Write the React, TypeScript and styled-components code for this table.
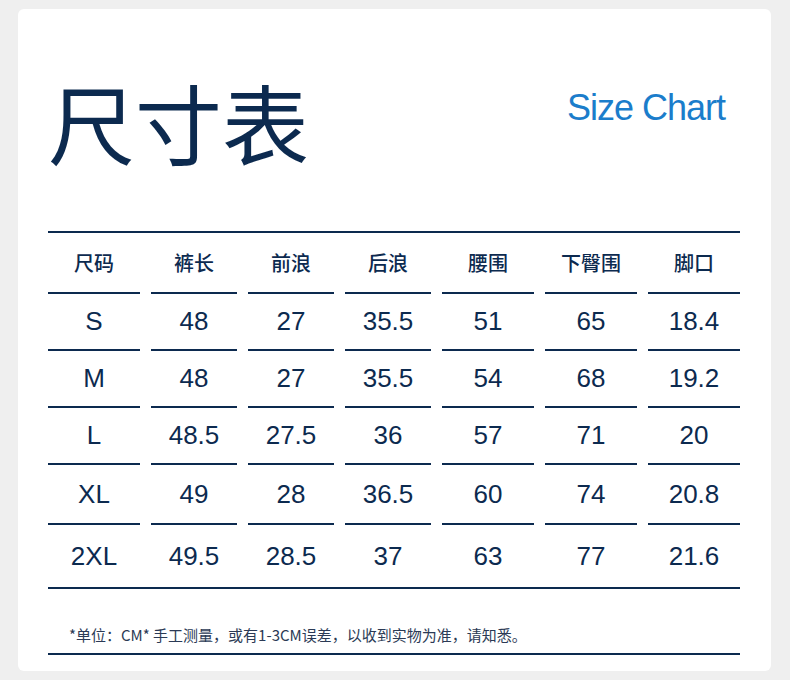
import React from 'react'
import styled, { createGlobalStyle } from 'styled-components'

const NAVY = '#0c2a4f'

const GlobalStyle = createGlobalStyle`
  html, body {
    margin: 0;
    padding: 0;
    background: #efefef;
  }
`

const headers = ['尺码', '裤长', '前浪', '后浪', '腰围', '下臀围', '脚口']

const rows: { cells: string[]; height: number }[] = [
  { cells: ['S', '48', '27', '35.5', '51', '65', '18.4'], height: 57 },
  { cells: ['M', '48', '27', '35.5', '54', '68', '19.2'], height: 57 },
  { cells: ['L', '48.5', '27.5', '36', '57', '71', '20'], height: 57 },
  { cells: ['XL', '49', '28', '36.5', '60', '74', '20.8'], height: 60 },
  { cells: ['2XL', '49.5', '28.5', '37', '63', '77', '21.6'], height: 62 },
]

const SizeChart: React.FC = () => {
  return (
    <Page>
      <GlobalStyle />
      <Card>
        <Header>
          <Title>尺寸表</Title>
          <Subtitle>Size Chart</Subtitle>
        </Header>
        <Table>
          {headers.map((h) => (
            <HeadCell key={h} $height={61}>
              {h}
            </HeadCell>
          ))}
          {rows.map((row, i) =>
            row.cells.map((c, j) => (
              <Cell
                key={`${i}-${j}`}
                $height={row.height}
                $last={i === rows.length - 1}
              >
                {c}
              </Cell>
            ))
          )}
        </Table>
        <Note>*单位：CM* 手工测量，或有1-3CM误差，以收到实物为准，请知悉。</Note>
      </Card>
    </Page>
  )
}

const Page = styled.div`
  padding: 9px 19px 10px 18px;
`

const Card = styled.div`
  width: 753px;
  box-sizing: border-box;
  background: #ffffff;
  border-radius: 6px;
  padding: 0 31px 16px 30px;
  display: flex;
  flex-direction: column;
`

const Header = styled.div`
  display: flex;
  justify-content: space-between;
  align-items: flex-start;
  height: 222px;
  padding-right: 15px;
`

const Title = styled.h1`
  margin: 60px 0 0 0;
  font-family: 'Noto Sans CJK SC', sans-serif;
  font-weight: 400;
  font-size: 87px;
  line-height: 1.2;
  color: ${NAVY};
`

const Subtitle = styled.div`
  margin-top: 77px;
  font-family: 'Liberation Sans', Arial, sans-serif;
  font-size: 36px;
  letter-spacing: -1px;
  line-height: 44px;
  color: #1b7dcb;
`

const Table = styled.div`
  display: grid;
  grid-template-columns: 92px 86px 86px 86px 92px 92px 92px;
  column-gap: 11px;
  border-top: 2px solid ${NAVY};
  border-bottom: 2px solid ${NAVY};
`

const HeadCell = styled.div<{ $height: number }>`
  height: ${(p) => p.$height}px;
  box-sizing: border-box;
  display: flex;
  align-items: center;
  justify-content: center;
  border-bottom: 2px solid ${NAVY};
  font-family: 'Noto Sans CJK SC', sans-serif;
  font-weight: 500;
  font-size: 20px;
  color: ${NAVY};
`

const Cell = styled.div<{ $height: number; $last: boolean }>`
  height: ${(p) => p.$height}px;
  box-sizing: border-box;
  display: flex;
  align-items: center;
  justify-content: center;
  border-bottom: ${(p) => (p.$last ? 'none' : `2px solid ${NAVY}`)};
  font-family: 'Liberation Sans', Arial, sans-serif;
  font-size: 26px;
  color: ${NAVY};
`

const Note = styled.div`
  height: 66px;
  box-sizing: border-box;
  padding: 36px 0 0 21px;
  border-bottom: 2px solid ${NAVY};
  font-family: 'Noto Sans CJK SC', sans-serif;
  font-size: 15px;
  line-height: 20px;
  color: #2b3a55;
`

export default SizeChart
